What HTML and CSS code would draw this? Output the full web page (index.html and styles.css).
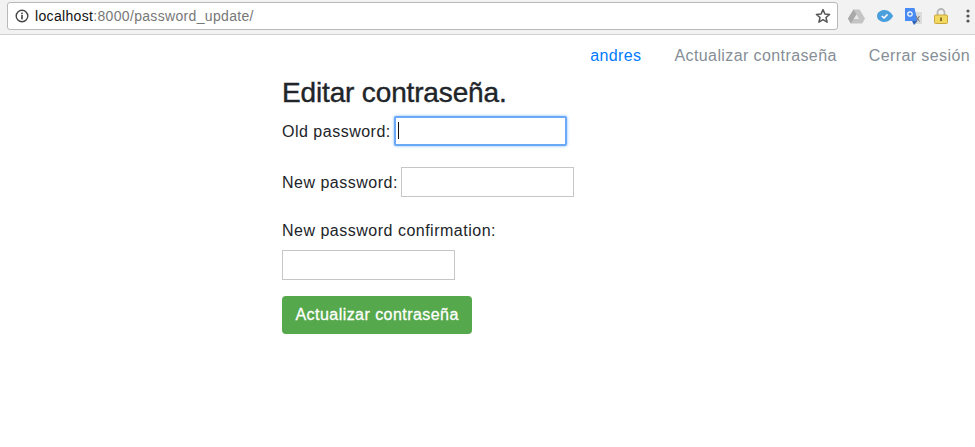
FILE: index.html
```html
<!DOCTYPE html>
<html>
<head>
<meta charset="utf-8"/>
<title>Editar contraseña</title>
<link rel="stylesheet" href="styles.css">
</head>
<body>
<div class="toolbar">
  <div class="omnibox">
    <svg class="info" width="14" height="14" viewBox="0 0 14 14"><circle cx="7" cy="7" r="5.8" fill="none" stroke="#444" stroke-width="1.4"/><rect x="6.2" y="6" width="1.6" height="4.4" fill="#444"/><rect x="6.2" y="3.6" width="1.6" height="1.6" fill="#444"/></svg>
    <span class="host">localhost</span><span class="path">:8000/password_update/</span>
    <svg class="star" width="16" height="16" viewBox="0 0 16 16"><path d="M8 1.600l1.900 4.400 4.700.4-3.600 3.100 1.100 4.700L8 11.700l-4.100 2.500 1.100-4.700-3.600-3.100 4.700-.4z" fill="none" stroke="#555" stroke-width="1.500" stroke-linejoin="round"/></svg>
  </div>
  <div class="exts">
    <svg class="ext-drive" width="17" height="15" viewBox="0 0 17 15"><path d="M5.500 0.500h6l5.500 9-2.800 5h-11.400l-2.800-5z" fill="#c4c4c4"/><path d="M5.500 .5l3 5-5.700 9-2.800-5z" fill="#a9a9a9"/><path d="M8.500 5.500l2.600 4.500h-5.300z" fill="#e8e8e8"/></svg>
    <svg class="ext-check" width="16" height="12" viewBox="0 0 16 12"><path d="M7.500 0c4 0 7.500 3.500 8.500 6-1 2.500-4.500 6-8.500 6-4 0-7.500-2.500-7.500-6 0-3.500 3.500-6 7.500-6z" fill="#4a9fdc"/><path d="M4.800 6l2.300 2 3.400-3.600" fill="none" stroke="#fff" stroke-width="1.600"/></svg>
    <svg class="ext-translate" width="17" height="17" viewBox="0 0 17 17"><path d="M6 4h11v12h-8z" fill="#dcdcdc"/><path d="M0 0h9.500l3 13h-12.500z" fill="#4a8af4"/><path d="M7 13h5.500l-3.500 4z" fill="#2f63b8"/><circle cx="5" cy="6" r="2.200" fill="none" stroke="#fff" stroke-width="1.200"/><path d="M11 8l3.500 5.500M14.500 8l-3.500 5.500" stroke="#777" stroke-width="1"/></svg>
    <svg class="ext-lock" width="14" height="16" viewBox="0 0 14 16"><path d="M3.500 8v-3.500a3.500 3.500 0 0 1 7 0v3.500" fill="none" stroke="#b5b5b5" stroke-width="1.800"/><rect x=".5" y="7" width="13" height="8.500" rx="1" fill="#f3d85f" stroke="#c9a83f"/><rect x="6.200" y="9.500" width="1.600" height="3.600" fill="#6f5c1e"/></svg>
    <svg class="ext-menu" width="4" height="14" viewBox="0 0 4 14"><circle cx="2" cy="2" r="1.600" fill="#555"/><circle cx="2" cy="7" r="1.600" fill="#555"/><circle cx="2" cy="12" r="1.600" fill="#555"/></svg>
  </div>
</div>

<nav class="nav">
  <a class="nav-link user" href="#">andres</a>
  <a class="nav-link" href="#">Actualizar contraseña</a>
  <a class="nav-link" href="#">Cerrar sesión</a>
</nav>

<div class="container">
  <h2 class="title">Editar contraseña.</h2>
  <form>
    <p class="field">
      <label>Old password:</label>
      <input class="focus" type="password">
      <span class="caret"></span>
    </p>
    <p class="field">
      <label>New password:</label>
      <input type="password">
    </p>
    <p class="field wrapped">
      <label>New password confirmation:</label>
      <input type="password">
    </p>
    <button class="btn" type="button">Actualizar contraseña</button>
  </form>
</div>
</body>
</html>
```

FILE: styles.css
```css
* { box-sizing: border-box; }
html, body { margin: 0; padding: 0; }
body { font-family: "Liberation Sans", Arial, sans-serif; font-size: 16px; color: #212529; background: #fff; letter-spacing: .5px; }

.toolbar { display: flex; height: 35px; padding: 2px 0 0 7px; background: #f2f2f2; border-bottom: 1px solid #d0d0d0; }
.omnibox { display: flex; align-items: center; width: 831px; height: 28px; padding: 0 6px 0 7px; background: #fff; border: 1px solid #b8b8b8; border-radius: 3px; font-size: 14px; letter-spacing: .33px; }
.info { margin-right: 6px; }
.host { color: #111; }
.path { color: #777; }
.star { margin-left: auto; }
.exts { display: flex; align-items: center; height: 28px; margin-left: 10px; }
.ext-check { margin-left: 12px; }
.ext-translate { margin-left: 12px; }
.ext-lock { margin-left: 12px; }
.ext-menu { margin-left: 18px; }

.nav { display: flex; justify-content: flex-end; height: 41px; padding-right: 5px; }
.nav-link { padding: 9px 0 0; margin-left: 32px; color: #868e96; text-decoration: none; line-height: 24px; letter-spacing: .4px; }
.user { color: #007bff; margin-right: 1px; }

.container { width: 693px; margin-left: 282px; }
.title { margin: 0 0 6px; font-size: 28px; font-weight: 400; line-height: 34px; letter-spacing: -.15px; -webkit-text-stroke: .4px #212529; }
.field { position: relative; display: flex; align-items: center; gap: 3px; margin: 0 0 21px; line-height: 24px; }
.field label { padding-top: 2px; }
.field input { width: 173px; height: 30px; padding: 0 6px; border: 1px solid #c6c6c6; background: #fff; outline: none; }
.field .focus { border: 2px solid #6aa9f5; border-radius: 2px; box-shadow: 0 0 3px #7db5f7; }
.caret { position: absolute; left: 116px; top: 6px; width: 1px; height: 17px; background: #111; }
.wrapped { display: block; margin-bottom: 16px; }
.wrapped label { display: block; padding-top: 1px; margin-bottom: 7px; }
.btn { display: block; height: 38px; padding: 0 13.5px; border: 0; border-radius: 4px; background: #55a84b; color: #fff; font: inherit; letter-spacing: .45px; -webkit-text-stroke: .3px #fff; }
```
